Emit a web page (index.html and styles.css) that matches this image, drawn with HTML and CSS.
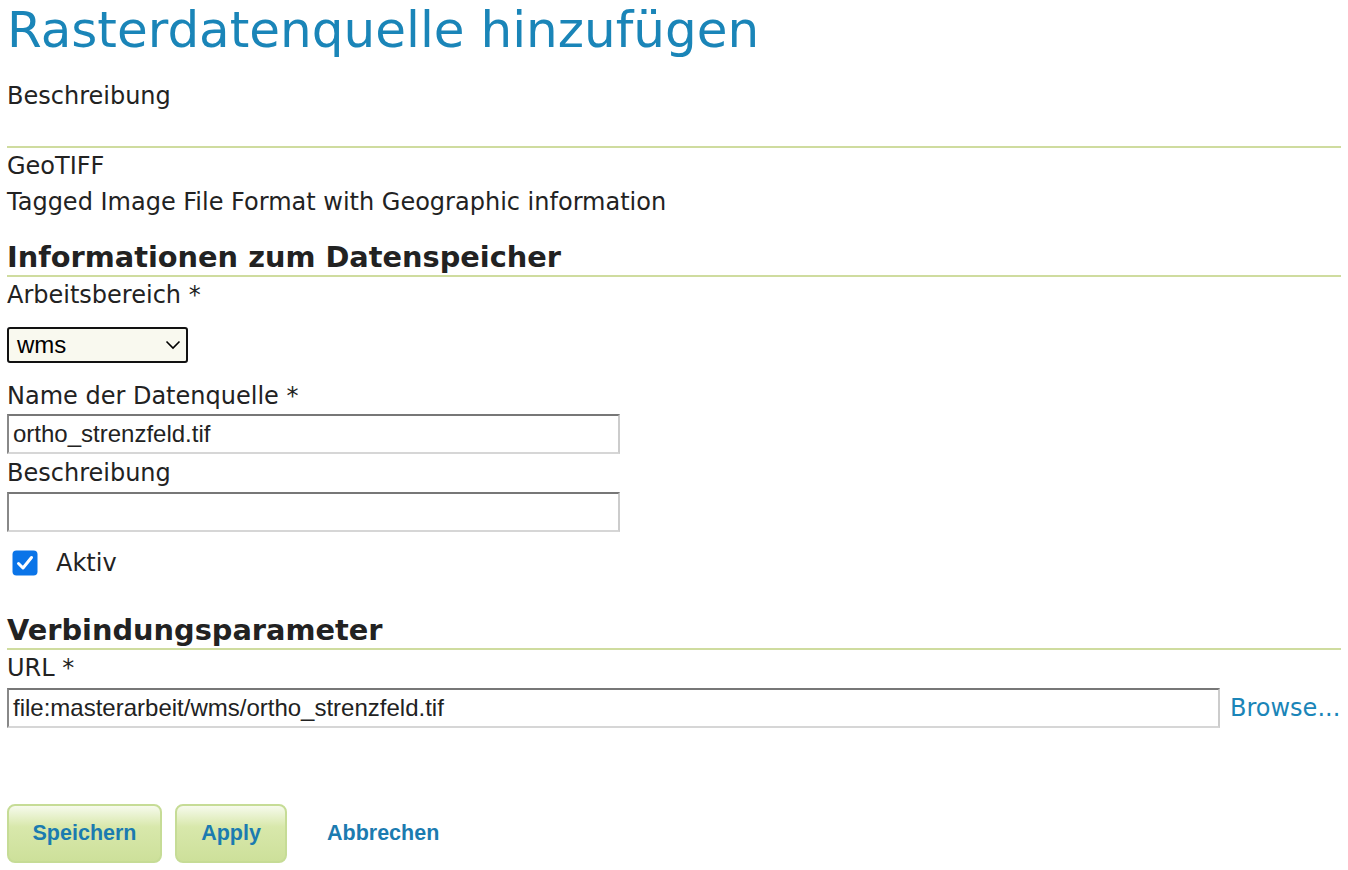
FILE: index.html
```html
<!DOCTYPE html>
<html lang="de">
<head>
<meta charset="utf-8">
<title>Rasterdatenquelle hinzufügen</title>
<link rel="stylesheet" href="styles.css">
</head>
<body>
<div class="page">
  <h1 class="title">Rasterdatenquelle hinzufügen</h1>
  <p class="intro">Beschreibung</p>
  <div class="store-type">
    <div class="type-name">GeoTIFF</div>
    <div class="type-desc">Tagged Image File Format with Geographic information</div>
  </div>

  <h2 class="section">Informationen zum Datenspeicher</h2>
  <label class="lbl">Arbeitsbereich *</label>
  <div class="select-wrap">
    <div class="select"><span>wms</span>
      <svg class="chev" width="16" height="10" viewBox="0 0 16 10"><path d="M1.5 1.5 L8 8 L14.5 1.5" fill="none" stroke="#000" stroke-width="1.6"/></svg>
    </div>
  </div>
  <label class="lbl">Name der Datenquelle *</label>
  <div class="input short">ortho_strenzfeld.tif</div>
  <label class="lbl lbl-gap">Beschreibung</label>
  <div class="input short input-gap"></div>
  <div class="check-row">
    <span class="checkbox"><svg width="26" height="26" viewBox="0 0 26 26"><rect x="0.5" y="0.5" width="25" height="25" rx="4" fill="#0a74e8"/><path d="M6.5 13.5 L11 18 L19.5 7.5" fill="none" stroke="#fff" stroke-width="3" stroke-linecap="round" stroke-linejoin="round"/></svg></span>
    <span class="check-label">Aktiv</span>
  </div>

  <h2 class="section section2">Verbindungsparameter</h2>
  <label class="lbl">URL *</label>
  <div class="url-row">
    <div class="input long">file:masterarbeit/wms/ortho_strenzfeld.tif</div>
    <a class="browse">Browse...</a>
  </div>

  <div class="buttons">
    <a class="btn">Speichern</a>
    <a class="btn btn-apply">Apply</a>
    <a class="cancel">Abbrechen</a>
  </div>
</div>
</body>
</html>
```
FILE: styles.css
```css
html, body { margin: 0; padding: 0; background: #fff; }
body { font-family: "DejaVu Sans", Verdana, sans-serif; color: #222; }
.page { padding: 0 7px; }
.title { margin: 0; font-weight: normal; font-size: 50px; line-height: 60px; color: #1a85b8; }
.intro { margin: 0; padding-top: 21px; font-size: 24px; line-height: 30px; height: 65px; border-bottom: 2px solid #cfdc9f; }
.store-type { font-size: 24px; line-height: 36px; }
.section { margin: 0; margin-top: 19px; font-size: 28.8px; font-weight: bold; line-height: 36px; border-bottom: 2px solid #cfdc9f; }
.section2 { margin-top: 36px; }
.lbl { display: block; font-size: 24px; line-height: 36px; }
.lbl-gap { margin-top: 1px; }
.select-wrap { padding: 14px 0 15px; }
.select { box-sizing: border-box; width: 181px; height: 36px; border: 2px solid #111; border-radius: 3px; background: #f9f9ef; display: flex; align-items: center; justify-content: space-between; padding: 0 5px 0 8px; font-family: "Liberation Sans", Arial, sans-serif; font-size: 24px; color: #000; }
.chev { display: block; }
.input { box-sizing: border-box; height: 40px; border: 2px solid #ccc; border-top-color: #777; border-left-color: #888; border-bottom-color: #d6d6d6; font-family: "Liberation Sans", Arial, sans-serif; font-size: 24px; color: #222; padding: 0 4px; display: flex; align-items: center; }
.input-gap { margin-top: 1px; }
.short { width: 613px; }
.long { width: 1213px; }
.check-row { display: flex; align-items: center; padding: 18px 0 0 5px; height: 26px; }
.checkbox { width: 26px; height: 26px; display: block; }
.checkbox svg { display: block; }
.check-label { font-size: 24px; margin-left: 18px; }
.url-row { display: flex; align-items: center; margin-top: 2px; }
.browse { font-size: 24px; color: #1a85b8; margin-left: 10px; }
.buttons { display: flex; align-items: center; margin-top: 76px; }
.btn { box-sizing: border-box; height: 59px; width: 155px; display: flex; align-items: center; justify-content: center; border: 2px solid #c6dc96; border-radius: 8px; background: linear-gradient(#f6faec 0%, #d8e8ab 38%, #cde09a 100%); font-family: "Liberation Sans", Arial, sans-serif; font-weight: bold; font-size: 21.5px; color: #1b7bb0; }
.btn-apply { width: 112px; margin-left: 13px; }
.cancel { margin-left: 40px; font-family: "Liberation Sans", Arial, sans-serif; font-weight: bold; font-size: 21.5px; color: #1b7bb0; }
```
